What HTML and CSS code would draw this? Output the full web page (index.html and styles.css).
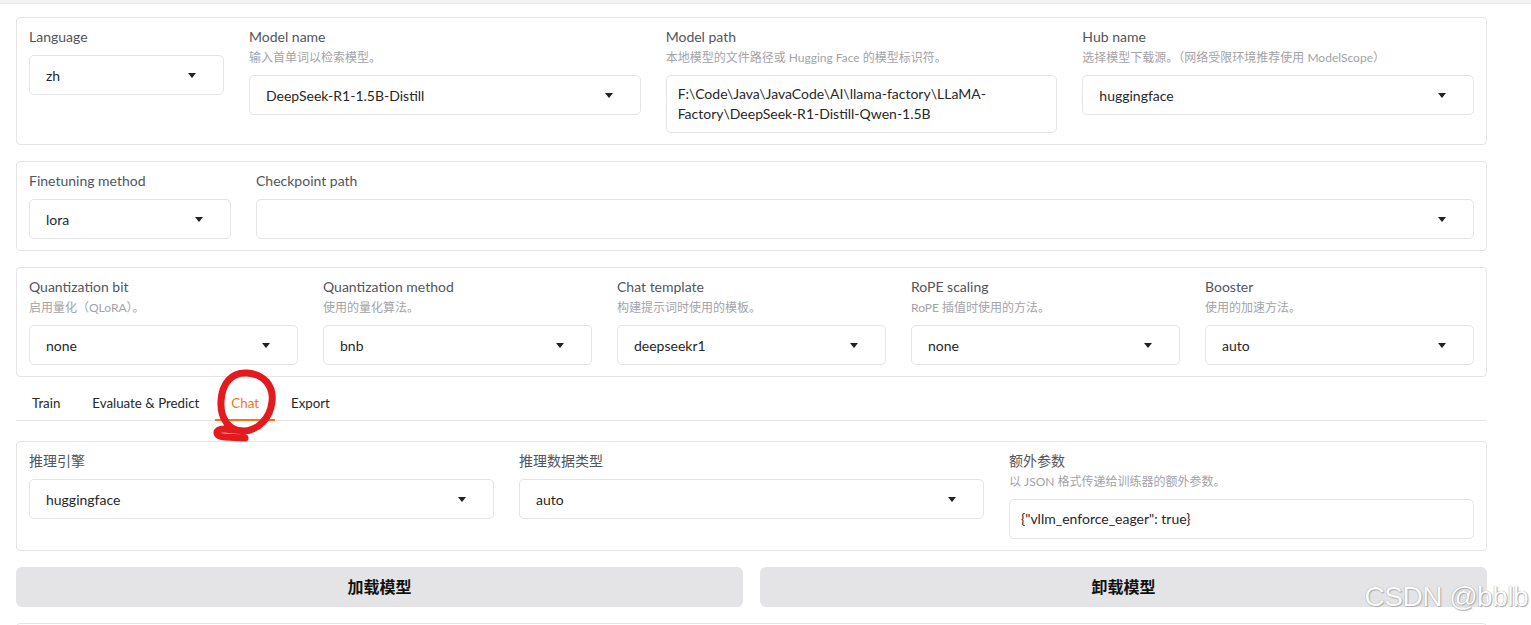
FILE: index.html
```html
<!DOCTYPE html>
<html>
<head>
  <meta charset="UTF-8">
  <title>LLaMA Board</title>
  <link rel="stylesheet" href="styles.css">
</head>
<body>
  <div class="topstrip"></div>

  <div class="page">
    <!-- model settings -->
    <div class="block">
      <div class="row">
        <div class="field w-lang">
          <div class="label">Language</div>
          <div class="select"><span>zh</span><i class="caret"></i></div>
        </div>
        <div class="field grow">
          <div class="label">Model name</div>
          <div class="desc">输入首单词以检索模型。</div>
          <div class="select"><span>DeepSeek-R1-1.5B-Distill</span><i class="caret"></i></div>
        </div>
        <div class="field grow">
          <div class="label">Model path</div>
          <div class="desc">本地模型的文件路径或 Hugging Face 的模型标识符。</div>
          <div class="textbox tall">F:\Code\Java\JavaCode\AI\llama-factory\LLaMA-Factory\DeepSeek-R1-Distill-Qwen-1.5B</div>
        </div>
        <div class="field grow">
          <div class="label">Hub name</div>
          <div class="desc">选择模型下载源。（网络受限环境推荐使用 ModelScope）</div>
          <div class="select"><span>huggingface</span><i class="caret"></i></div>
        </div>
      </div>
    </div>

    <div class="block">
      <div class="row">
        <div class="field w-method">
          <div class="label">Finetuning method</div>
          <div class="select"><span>lora</span><i class="caret"></i></div>
        </div>
        <div class="field grow">
          <div class="label">Checkpoint path</div>
          <div class="select"><span></span><i class="caret"></i></div>
        </div>
      </div>
    </div>

    <div class="block">
      <div class="row">
        <div class="field grow">
          <div class="label">Quantization bit</div>
          <div class="desc">启用量化（QLoRA）。</div>
          <div class="select"><span>none</span><i class="caret"></i></div>
        </div>
        <div class="field grow">
          <div class="label">Quantization method</div>
          <div class="desc">使用的量化算法。</div>
          <div class="select"><span>bnb</span><i class="caret"></i></div>
        </div>
        <div class="field grow">
          <div class="label">Chat template</div>
          <div class="desc">构建提示词时使用的模板。</div>
          <div class="select"><span>deepseekr1</span><i class="caret"></i></div>
        </div>
        <div class="field grow">
          <div class="label">RoPE scaling</div>
          <div class="desc">RoPE 插值时使用的方法。</div>
          <div class="select"><span>none</span><i class="caret"></i></div>
        </div>
        <div class="field grow">
          <div class="label">Booster</div>
          <div class="desc">使用的加速方法。</div>
          <div class="select"><span>auto</span><i class="caret"></i></div>
        </div>
      </div>
    </div>

    <!-- tabs -->
    <div class="tabs">
      <div class="tab">Train</div>
      <div class="tab">Evaluate &amp; Predict</div>
      <div class="tab active">Chat</div>
      <div class="tab">Export</div>
    </div>

    <div class="tab-body">
      <div class="block">
        <div class="row">
          <div class="field grow">
            <div class="label">推理引擎</div>
            <div class="select"><span>huggingface</span><i class="caret"></i></div>
          </div>
          <div class="field grow">
            <div class="label">推理数据类型</div>
            <div class="select"><span>auto</span><i class="caret"></i></div>
          </div>
          <div class="field grow">
            <div class="label">额外参数</div>
            <div class="desc">以 JSON 格式传递给训练器的额外参数。</div>
            <div class="textbox">{"vllm_enforce_eager": true}</div>
          </div>
        </div>
      </div>

      <div class="buttons">
        <div class="btn">加载模型</div>
        <div class="btn">卸载模型</div>
      </div>

      <div class="block empty"></div>
    </div>
  </div>

  <!-- hand-drawn mark over the Chat tab -->
  <svg class="scribble" width="80" height="80" viewBox="205 365 80 80">
    <path d="M244 431 C229 431 220 419 221 401 C222 383 232 372 247 373 C264 374 274 386 272 402 C270 418 259 430 244 431 L224 429 C214 429 215 437 225 437 L245 438"
          fill="none" stroke="#e31b1f" stroke-width="7" stroke-linecap="round" stroke-linejoin="round"/>
  </svg>

  <div class="watermark">CSDN @bblb</div>
</body>
</html>
```

FILE: styles.css
```css
body {
  margin: 0;
  background: #fff;
  font-family: Lato, "Noto Sans CJK SC", sans-serif;
  font-size: 14px;
  color: #27272a;
  overflow: hidden;
}

.topstrip {
  height: 3px;
  background: #f4f4f5;
  border-bottom: 1px solid #e7e7e9;
}

.page {
  width: 1471px;
  margin: 13px 0 0 16px;
}

.block {
  border: 1px solid #e4e4e7;
  border-radius: 4px;
  padding: 9px 12px 11px;
  margin-bottom: 16px;
}

.block.empty {
  height: 60px;
}

.row {
  display: flex;
  gap: 25px;
  align-items: flex-start;
}

.field {
  display: flex;
  flex-direction: column;
  min-width: 0;
}

.grow {
  flex: 1 1 0;
}

.w-lang {
  width: 195px;
}

.w-method {
  width: 202px;
}

.label {
  line-height: 20px;
  font-size: 14px;
  color: #52555c;
  margin-bottom: 8px;
}

.desc {
  line-height: 18px;
  font-size: 12px;
  color: #a3a3a8;
  margin: -6px 0 8px;
}

.select {
  height: 40px;
  box-sizing: border-box;
  border: 1px solid #e4e4e7;
  border-radius: 5px;
  padding: 0 27px 0 16px;
  display: flex;
  align-items: center;
  justify-content: space-between;
  color: #27272a;
}

.caret {
  width: 0;
  height: 0;
  border-left: 4px solid transparent;
  border-right: 4px solid transparent;
  border-top: 5px solid #222;
}

.textbox {
  border: 1px solid #e4e4e7;
  border-radius: 5px;
  padding: 9px 11px;
  line-height: 20px;
  color: #27272a;
}

.textbox.tall {
  padding: 8px 11px;
}

.tabs {
  display: flex;
  border-bottom: 1px solid #e4e4e7;
  margin-top: -8px;
  height: 36px;
  box-sizing: border-box;
}

.tab {
  padding: 0 16px;
  line-height: 36px;
  height: 36px;
  box-sizing: border-box;
  font-size: 13.3px;
  color: #27272a;
}

.tab.active {
  color: #f97316;
  border-bottom: 2px solid #f97316;
}

.tab-body {
  padding-top: 20px;
}

.buttons {
  display: flex;
  gap: 17px;
  margin-bottom: 16px;
}

.btn {
  flex: 1 1 0;
  height: 40px;
  line-height: 40px;
  text-align: center;
  background: #e4e4e7;
  border-radius: 6px;
  font-size: 16px;
  font-weight: bold;
  color: #111;
}

.scribble {
  position: absolute;
  left: 205px;
  top: 365px;
}

.watermark {
  position: absolute;
  right: 3px;
  top: 581px;
  font-family: "Liberation Sans", sans-serif;
  font-size: 28px;
  color: #fbfbfb;
  text-shadow: 0 0 1px #8a8a8a, 1px 1px 1px #b0b0b0;
  letter-spacing: -0.5px;
}
```
